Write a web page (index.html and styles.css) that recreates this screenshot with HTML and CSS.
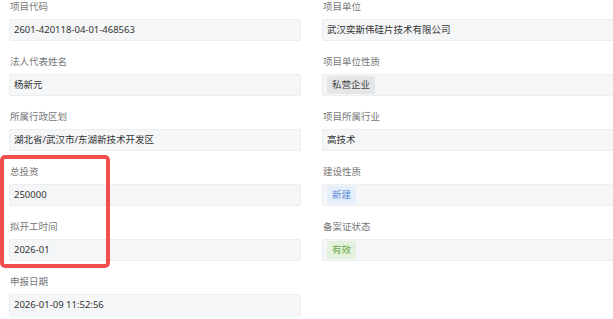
FILE: index.html
```html
<!DOCTYPE html>
<html lang="zh-CN">
<head>
    <meta charset="UTF-8">
    <meta name="viewport" content="width=device-width, initial-scale=1.0">
    <title>项目信息</title>
    <link rel="stylesheet" href="styles.css">
</head>
<body>
    <div class="page">
        <div class="form-grid">
            <div class="column">
                <div class="field">
                    <div class="label">项目代码</div>
                    <div class="value">2601-420118-04-01-468563</div>
                </div>
                <div class="field">
                    <div class="label">法人代表姓名</div>
                    <div class="value">杨新元</div>
                </div>
                <div class="field">
                    <div class="label">所属行政区划</div>
                    <div class="value">湖北省/武汉市/东湖新技术开发区</div>
                </div>
                <div class="field">
                    <div class="label">总投资</div>
                    <div class="value">250000</div>
                </div>
                <div class="field">
                    <div class="label">拟开工时间</div>
                    <div class="value">2026-01</div>
                </div>
                <div class="field">
                    <div class="label">申报日期</div>
                    <div class="value">2026-01-09 11:52:56</div>
                </div>
            </div>

            <div class="column">
                <div class="field">
                    <div class="label">项目单位</div>
                    <div class="value">武汉奕斯伟硅片技术有限公司</div>
                </div>
                <div class="field">
                    <div class="label">项目单位性质</div>
                    <div class="value"><span class="tag tag-gray">私营企业</span></div>
                </div>
                <div class="field">
                    <div class="label">项目所属行业</div>
                    <div class="value">高技术</div>
                </div>
                <div class="field">
                    <div class="label">建设性质</div>
                    <div class="value"><span class="tag tag-blue">新建</span></div>
                </div>
                <div class="field">
                    <div class="label">备案证状态</div>
                    <div class="value"><span class="tag tag-green">有效</span></div>
                </div>
            </div>
        </div>

        <!-- 标注框 -->
        <div class="highlight"></div>
    </div>
</body>
</html>
```

FILE: styles.css
```css
body {
    margin: 0;
    background: #fff;
    font-family: "Noto Sans", "Noto Sans CJK SC", sans-serif;
    overflow: hidden;
}

.page {
    position: relative;
    width: 613px;
    height: 319px;
    overflow: hidden;
}

.form-grid {
    display: grid;
    grid-template-columns: 292px 292px;
    column-gap: 21px;
    padding-left: 9px;
}

.field {
    margin-bottom: 14px;
}

.label {
    height: 14px;
    line-height: 14px;
    margin-bottom: 5px;
    padding-left: 1px;
    font-size: 9.5px;
    color: #777;
}

.value {
    box-sizing: border-box;
    height: 22px;
    line-height: 20px;
    padding: 0 4px;
    background-color: #f5f6f7;
    border: 1px solid #ebedef;
    border-radius: 2px;
    font-size: 9.5px;
    color: #333;
    display: flex;
    align-items: center;
    white-space: nowrap;
}

.tag {
    display: inline-block;
    height: 18px;
    line-height: 18px;
    padding: 0 5px;
    border-radius: 2px;
    font-size: 9.5px;
}

.tag-gray {
    background-color: #e5e6e8;
    color: #444;
}

.tag-blue {
    background-color: #e5eefb;
    color: #5a8bd8;
}

.tag-green {
    background-color: #e4f1dc;
    color: #64a844;
}

.highlight {
    position: absolute;
    left: 0;
    top: 155px;
    width: 110px;
    height: 113px;
    box-sizing: border-box;
    border: 4px solid #ef4f4f;
    border-radius: 5px;
}
```
